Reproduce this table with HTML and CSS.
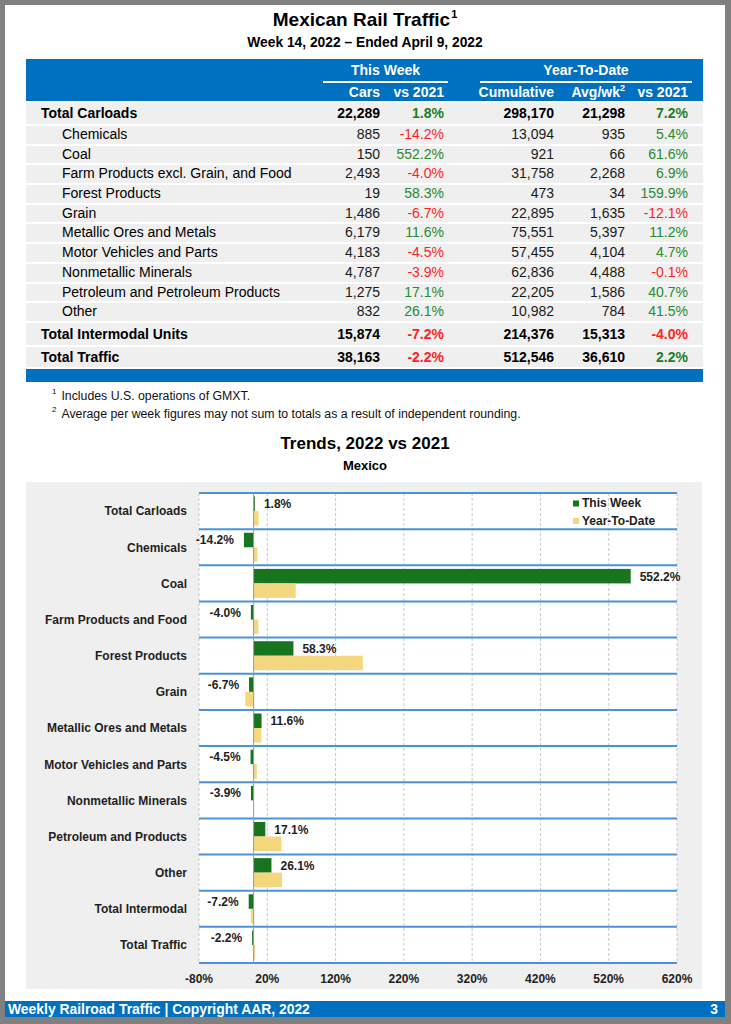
FILE: index.html
```html
<!DOCTYPE html>
<html lang="en">
<head>
<meta charset="utf-8">
<title>Mexican Rail Traffic</title>
<link rel="stylesheet" href="styles.css">
</head>
<body>
<div class="page">
  <header class="head">
    <h1 class="title">Mexican Rail Traffic<sup class="title-sup">1</sup></h1>
    <p class="subtitle">Week 14, 2022 – Ended April 9, 2022</p>
  </header>

  <section class="traffic">
    <div class="thead">
      <div class="group g-week">This Week</div>
      <div class="group g-ytd">Year-To-Date</div>
      <div class="hc c2">Cars</div>
      <div class="hc c3">vs 2021</div>
      <div class="hc c4">Cumulative</div>
      <div class="hc c5">Avg/wk<sup class="hsup">2</sup></div>
      <div class="hc c6">vs 2021</div>
    </div>

    <div class="row total r-first"><span class="lbl">Total Carloads</span><span>22,289</span><span class="up">1.8%</span><span>298,170</span><span>21,298</span><span class="up">7.2%</span></div>
    <div class="row sub"><span class="lbl">Chemicals</span><span>885</span><span class="down">-14.2%</span><span>13,094</span><span>935</span><span class="up">5.4%</span></div>
    <div class="row sub"><span class="lbl">Coal</span><span>150</span><span class="up">552.2%</span><span>921</span><span>66</span><span class="up">61.6%</span></div>
    <div class="row sub"><span class="lbl">Farm Products excl. Grain, and Food</span><span>2,493</span><span class="down">-4.0%</span><span>31,758</span><span>2,268</span><span class="up">6.9%</span></div>
    <div class="row sub"><span class="lbl">Forest Products</span><span>19</span><span class="up">58.3%</span><span>473</span><span>34</span><span class="up">159.9%</span></div>
    <div class="row sub"><span class="lbl">Grain</span><span>1,486</span><span class="down">-6.7%</span><span>22,895</span><span>1,635</span><span class="down">-12.1%</span></div>
    <div class="row sub"><span class="lbl">Metallic Ores and Metals</span><span>6,179</span><span class="up">11.6%</span><span>75,551</span><span>5,397</span><span class="up">11.2%</span></div>
    <div class="row sub"><span class="lbl">Motor Vehicles and Parts</span><span>4,183</span><span class="down">-4.5%</span><span>57,455</span><span>4,104</span><span class="up">4.7%</span></div>
    <div class="row sub"><span class="lbl">Nonmetallic Minerals</span><span>4,787</span><span class="down">-3.9%</span><span>62,836</span><span>4,488</span><span class="down">-0.1%</span></div>
    <div class="row sub"><span class="lbl">Petroleum and Petroleum Products</span><span>1,275</span><span class="up">17.1%</span><span>22,205</span><span>1,586</span><span class="up">40.7%</span></div>
    <div class="row sub"><span class="lbl">Other</span><span>832</span><span class="up">26.1%</span><span>10,982</span><span>784</span><span class="up">41.5%</span></div>
    <div class="row total r-inter"><span class="lbl">Total Intermodal Units</span><span>15,874</span><span class="down">-7.2%</span><span>214,376</span><span>15,313</span><span class="down">-4.0%</span></div>
    <div class="row total r-traffic"><span class="lbl">Total Traffic</span><span>38,163</span><span class="down">-2.2%</span><span>512,546</span><span>36,610</span><span class="up">2.2%</span></div>
    <div class="tfoot"></div>
  </section>

  <div class="notes">
    <p class="note"><sup class="nsup">1</sup>Includes U.S. operations of GMXT.</p>
    <p class="note"><sup class="nsup">2</sup>Average per week figures may not sum to totals as a result of independent rounding.</p>
  </div>

  <h2 class="trend-title">Trends, 2022 vs 2021</h2>
  <p class="region">Mexico</p>

  <div class="chart">
    <svg class="chart-svg" width="676" height="507" viewBox="0 0 676 507">
      <rect x="173" y="11" width="478" height="470" fill="#ffffff"/>
      <g class="grid">
        <line x1="173" y1="11" x2="173" y2="481"/>
        <line x1="241.29" y1="11" x2="241.29" y2="481"/>
        <line x1="309.57" y1="11" x2="309.57" y2="481"/>
        <line x1="377.86" y1="11" x2="377.86" y2="481"/>
        <line x1="446.14" y1="11" x2="446.14" y2="481"/>
        <line x1="514.43" y1="11" x2="514.43" y2="481"/>
        <line x1="582.71" y1="11" x2="582.71" y2="481"/>
        <line x1="651" y1="11" x2="651" y2="481"/>
      </g>
      <g class="rowlines">
        <line x1="173" y1="11" x2="651" y2="11"/>
        <line x1="173" y1="47.15" x2="651" y2="47.15"/>
        <line x1="173" y1="83.31" x2="651" y2="83.31"/>
        <line x1="173" y1="119.46" x2="651" y2="119.46"/>
        <line x1="173" y1="155.62" x2="651" y2="155.62"/>
        <line x1="173" y1="191.77" x2="651" y2="191.77"/>
        <line x1="173" y1="227.92" x2="651" y2="227.92"/>
        <line x1="173" y1="264.08" x2="651" y2="264.08"/>
        <line x1="173" y1="300.23" x2="651" y2="300.23"/>
        <line x1="173" y1="336.38" x2="651" y2="336.38"/>
        <line x1="173" y1="372.54" x2="651" y2="372.54"/>
        <line x1="173" y1="408.69" x2="651" y2="408.69"/>
        <line x1="173" y1="444.85" x2="651" y2="444.85"/>
        <line x1="173" y1="481" x2="651" y2="481"/>
      </g>
      <g class="bars-week">
        <rect x="227.63" y="14.6" width="1.23" height="14.5"/>
        <rect x="217.93" y="50.75" width="9.7" height="14.5"/>
        <rect x="227.63" y="86.91" width="377.07" height="14.5"/>
        <rect x="224.9" y="123.06" width="2.73" height="14.5"/>
        <rect x="227.63" y="159.22" width="39.81" height="14.5"/>
        <rect x="223.05" y="195.37" width="4.58" height="14.5"/>
        <rect x="227.63" y="231.52" width="7.92" height="14.5"/>
        <rect x="224.56" y="267.68" width="3.07" height="14.5"/>
        <rect x="224.97" y="303.83" width="2.66" height="14.5"/>
        <rect x="227.63" y="339.98" width="11.68" height="14.5"/>
        <rect x="227.63" y="376.14" width="17.82" height="14.5"/>
        <rect x="222.71" y="412.29" width="4.92" height="14.5"/>
        <rect x="226.13" y="448.45" width="1.5" height="14.5"/>
      </g>
      <g class="bars-ytd">
        <rect x="227.63" y="29.1" width="4.92" height="14.5"/>
        <rect x="227.63" y="65.25" width="3.69" height="14.5"/>
        <rect x="227.63" y="101.41" width="42.06" height="14.5"/>
        <rect x="227.63" y="137.56" width="4.71" height="14.5"/>
        <rect x="227.63" y="173.72" width="109.19" height="14.5"/>
        <rect x="219.37" y="209.87" width="8.26" height="14.5"/>
        <rect x="227.63" y="246.02" width="7.65" height="14.5"/>
        <rect x="227.63" y="282.18" width="3.21" height="14.5"/>
        <rect x="227.56" y="318.33" width="0.07" height="14.5"/>
        <rect x="227.63" y="354.48" width="27.79" height="14.5"/>
        <rect x="227.63" y="390.64" width="28.34" height="14.5"/>
        <rect x="224.9" y="426.79" width="2.73" height="14.5"/>
        <rect x="227.63" y="462.95" width="1.5" height="14.5"/>
      </g>
      <line class="zero" x1="227.63" y1="11" x2="227.63" y2="481"/>
      <g class="vlabels">
        <text x="237.9" y="26.2">1.8%</text>
        <text x="207.9" y="62.3" text-anchor="end">-14.2%</text>
        <text x="613.7" y="98.5">552.2%</text>
        <text x="214.9" y="134.6" text-anchor="end">-4.0%</text>
        <text x="276.4" y="170.8">58.3%</text>
        <text x="213.1" y="206.9" text-anchor="end">-6.7%</text>
        <text x="244.6" y="243.1">11.6%</text>
        <text x="214.6" y="279.2" text-anchor="end">-4.5%</text>
        <text x="215" y="315.4" text-anchor="end">-3.9%</text>
        <text x="248.3" y="351.5">17.1%</text>
        <text x="254.5" y="387.7">26.1%</text>
        <text x="212.7" y="423.8" text-anchor="end">-7.2%</text>
        <text x="216.1" y="460" text-anchor="end">-2.2%</text>
      </g>
      <g class="cats">
        <text x="161" y="33.4">Total Carloads</text>
        <text x="161" y="69.5">Chemicals</text>
        <text x="161" y="105.7">Coal</text>
        <text x="161" y="141.8">Farm Products and Food</text>
        <text x="161" y="178">Forest Products</text>
        <text x="161" y="214.2">Grain</text>
        <text x="161" y="250.3">Metallic Ores and Metals</text>
        <text x="161" y="286.5">Motor Vehicles and Parts</text>
        <text x="161" y="322.6">Nonmetallic Minerals</text>
        <text x="161" y="358.8">Petroleum and Products</text>
        <text x="161" y="394.9">Other</text>
        <text x="161" y="431.1">Total Intermodal</text>
        <text x="161" y="467.2">Total Traffic</text>
      </g>
      <g class="ticks">
        <text x="173" y="501.3">-80%</text>
        <text x="241.29" y="501.3">20%</text>
        <text x="309.57" y="501.3">120%</text>
        <text x="377.86" y="501.3">220%</text>
        <text x="446.14" y="501.3">320%</text>
        <text x="514.43" y="501.3">420%</text>
        <text x="582.71" y="501.3">520%</text>
        <text x="651" y="501.3">620%</text>
      </g>
      <g class="legend">
        <rect class="sw-week" x="547" y="18.5" width="6" height="6"/>
        <text x="556" y="25.4">This Week</text>
        <rect class="sw-ytd" x="547" y="36" width="6" height="6"/>
        <text x="556" y="43">Year-To-Date</text>
      </g>
    </svg>
  </div>

  <footer class="footer">
    <span>Weekly Railroad Traffic | Copyright AAR, 2022</span>
    <span>3</span>
  </footer>
</div>
</body>
</html>
```

FILE: styles.css
```css
* { box-sizing: border-box; }

html, body {
  margin: 0;
  padding: 0;
  background: #808080;
}

body {
  font-family: "Liberation Sans", Arial, Helvetica, sans-serif;
  color: #000;
}

.page {
  width: 720px;
  height: 1012px;
  margin: 5px 6px 7px 5px;
  background: #ffffff;
  display: flex;
  flex-direction: column;
}

/* ---------- heading ---------- */
.head {
  text-align: center;
  padding-top: 4px;
}

.title {
  margin: 0;
  font-size: 19px;
  line-height: 22px;
  font-weight: bold;
}

.title-sup {
  font-size: 11px;
  line-height: 0;
  vertical-align: 8px;
  margin-left: 1px;
}

.subtitle {
  margin: 4px 0 0;
  font-size: 13.8px;
  line-height: 16px;
  font-weight: bold;
}

/* ---------- table ---------- */
.traffic {
  margin: 8px 22px 0 21px;
  width: 677px;
}

.thead,
.row {
  display: grid;
  grid-template-columns: 290px 64px 64px 110px 71px 63px;
  padding-right: 15px;
}

.thead {
  background: #0070c0;
  color: #ffffff;
  font-weight: bold;
  font-size: 14px;
  grid-template-rows: 24px 18px;
}

.group {
  border-bottom: 2px solid #ffffff;
  text-align: center;
  line-height: 22px;
  grid-row: 1;
}

.g-week {
  grid-column: 2 / 4;
  margin: 0 -4px 0 7px;
}

.g-ytd {
  grid-column: 4 / 7;
  margin: 0 -4px 0 36px;
}

.hc {
  grid-row: 2;
  text-align: right;
  line-height: 18px;
  white-space: nowrap;
}

.c2 { grid-column: 2; }
.c3 { grid-column: 3; }
.c4 { grid-column: 4; }
.c5 { grid-column: 5; }
.c6 { grid-column: 6; }

.hsup {
  font-size: 9px;
  line-height: 0;
  vertical-align: 6px;
}

.row {
  margin-top: 2px;
  background: #efefef;
  font-size: 14px;
  color: #1a1a1a;
  align-items: center;
}

.row span { text-align: right; white-space: nowrap; }
.row .lbl { text-align: left; padding-left: 15px; color: #000; }
.row.sub .lbl { padding-left: 36px; }

.row.sub { height: 17.7px; line-height: 17.7px; }
.row.total { font-weight: bold; color: #000; }
.r-first { height: 21px; line-height: 21px; }
.r-inter { height: 22px; line-height: 22px; }
.r-traffic { height: 20px; line-height: 20px; }

.up { color: #2b8a2b; }
.down { color: #ff1f1f; }
.total .up { color: #1f7d1f; }

.tfoot {
  margin-top: 2px;
  height: 13px;
  background: #0070c0;
}

/* ---------- notes ---------- */
.notes {
  margin-top: 5px;
  padding-left: 47px;
}

.note {
  margin: 0;
  font-size: 12.3px;
  line-height: 18px;
  color: #111;
}

.nsup {
  font-size: 8px;
  line-height: 0;
  vertical-align: 6px;
  margin-right: 5px;
}

/* ---------- chart ---------- */
.trend-title {
  margin: 11px 0 0;
  text-align: center;
  font-size: 17px;
  line-height: 20px;
  font-weight: bold;
}

.region {
  margin: 4px 0 0;
  text-align: center;
  font-size: 13px;
  line-height: 16px;
  font-weight: bold;
}

.chart {
  margin: 8px 22px 0 21px;
  width: 676px;
  height: 507px;
  background: #efefef;
}

.chart-svg {
  display: block;
  font-family: "Liberation Sans", Arial, Helvetica, sans-serif;
  font-weight: bold;
  font-size: 12px;
}

.chart-svg text { fill: #1e1e1e; }

.grid line {
  stroke: #c9c9c9;
  stroke-width: 1;
  stroke-dasharray: 3 2;
}

.rowlines line {
  stroke: #4a93dc;
  stroke-width: 2;
}

.bars-week rect,
.sw-week { fill: #18741f; }

.bars-ytd rect,
.sw-ytd { fill: #f4d77f; }

.zero {
  stroke: #9a9a9a;
  stroke-width: 1;
}

.cats text { text-anchor: end; }
.ticks text { text-anchor: middle; }

/* ---------- footer ---------- */
.footer {
  margin-top: auto;
  height: 16px;
  background: #0070c0;
  color: #ffffff;
  font-weight: bold;
  font-size: 13.9px;
  line-height: 16px;
  display: flex;
  justify-content: space-between;
  padding: 0 7px 0 3px;
}
```
